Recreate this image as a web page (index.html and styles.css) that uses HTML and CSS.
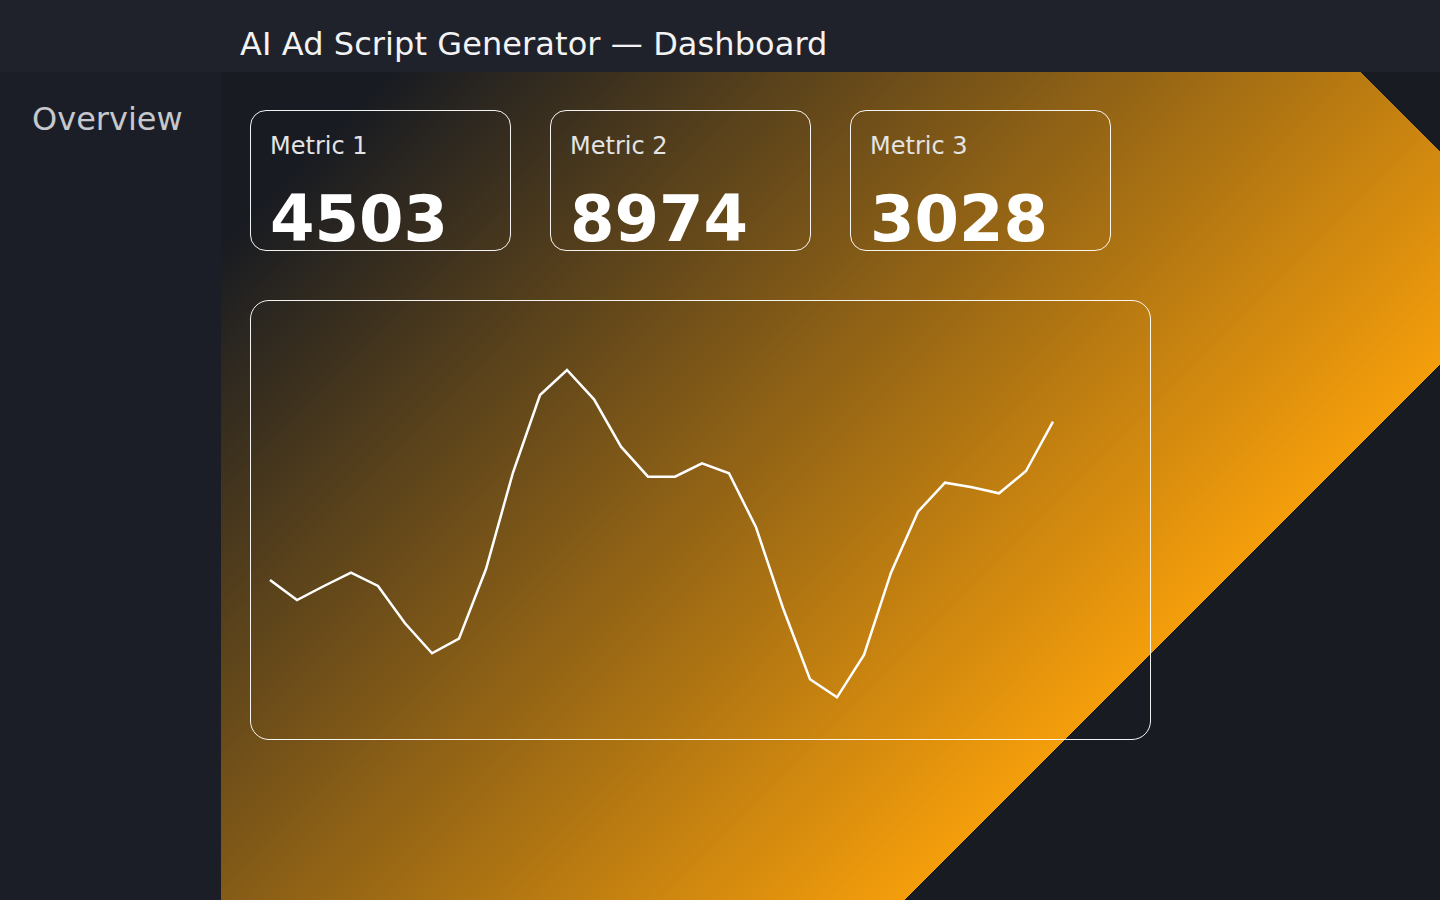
FILE: index.html
```html
<!DOCTYPE html>
<html lang="en">
<head>
<meta charset="utf-8">
<title>AI Ad Script Generator — Dashboard</title>
<link rel="stylesheet" href="styles.css">
</head>
<body>
<header class="topbar">
  <h1 class="title">AI Ad Script Generator — Dashboard</h1>
</header>
<div class="layout">
  <aside class="sidebar">
    <nav class="nav">
      <a class="nav-item">Overview</a>
    </nav>
  </aside>
  <main class="main">
    <section class="metrics">
      <div class="card">
        <div class="card-label">Metric 1</div>
        <div class="card-value">4503</div>
      </div>
      <div class="card">
        <div class="card-label">Metric 2</div>
        <div class="card-value">8974</div>
      </div>
      <div class="card">
        <div class="card-label">Metric 3</div>
        <div class="card-value">3028</div>
      </div>
    </section>
    <section class="chart">
      <svg class="chart-svg" viewBox="0 0 899 438" width="899" height="438" xmlns="http://www.w3.org/2000/svg">
        <polyline class="chart-line" points="19,279 46,299 73,285 100,271.7 127,285 154,322.3 181,352.3 208,337.7 235,268 262,171.5 289,94 316,69 343,98.3 370,145.7 397,175.7 424,175.7 451,162.3 478,172.3 505,226.3 532,307 559,378.3 586,396.3 613,354 640,271.7 667,210.7 694,181.7 721,186.3 748,192.3 775,170 802,120.7"/>
      </svg>
    </section>
  </main>
</div>
</body>
</html>
```

FILE: styles.css
```css
html, body {
  margin: 0;
  padding: 0;
  height: 100%;
}

body {
  font-family: "DejaVu Sans", "Liberation Sans", sans-serif;
  background: #181b22;
  color: #ffffff;
  display: flex;
  flex-direction: column;
  height: 100vh;
  overflow: hidden;
}

.topbar {
  flex: none;
  height: 72px;
  box-sizing: border-box;
  background: #1f222b;
  padding: 25px 0 0 240px;
}

.title {
  margin: 0;
  font-size: 32px;
  font-weight: normal;
  line-height: normal;
  letter-spacing: 0.08px;
  color: #f3f3f3;
  white-space: nowrap;
}

.layout {
  flex: 1;
  display: flex;
  min-height: 0;
}

.sidebar {
  flex: none;
  width: 221px;
  box-sizing: border-box;
  background: #1b1e26;
  padding: 28px 0 0 32px;
}

.nav {
  display: flex;
  flex-direction: column;
}

.nav-item {
  font-size: 32px;
  line-height: normal;
  color: #c6c8cd;
}

.main {
  flex: 1;
  box-sizing: border-box;
  padding: 38px 0 0 29px;
  background:
    linear-gradient(45deg, transparent 96.1%, #181b22 96.1%),
    linear-gradient(135deg, #181b22 8.3%, #f59e0b 73.86%, #181b22 73.86%);
}

.metrics {
  display: flex;
  gap: 39px;
}

.card {
  width: 261px;
  height: 141px;
  box-sizing: border-box;
  border: 1px solid rgba(255, 255, 255, 0.94);
  border-radius: 16px;
  padding: 21px 18px 0 19px;
}

.card-label {
  font-size: 24px;
  line-height: 28px;
  color: #e4e4e4;
}

.card-value {
  margin-top: 27px;
  font-size: 64px;
  line-height: 64px;
  font-weight: bold;
  color: #ffffff;
}

.chart {
  margin-top: 49px;
  width: 901px;
  height: 440px;
  box-sizing: border-box;
  border: 1px solid rgba(255, 255, 255, 0.94);
  border-radius: 19px;
}

.chart-svg {
  display: block;
}

.chart-line {
  fill: none;
  stroke: #ffffff;
  stroke-width: 2.5;
  stroke-linejoin: miter;
}
```
